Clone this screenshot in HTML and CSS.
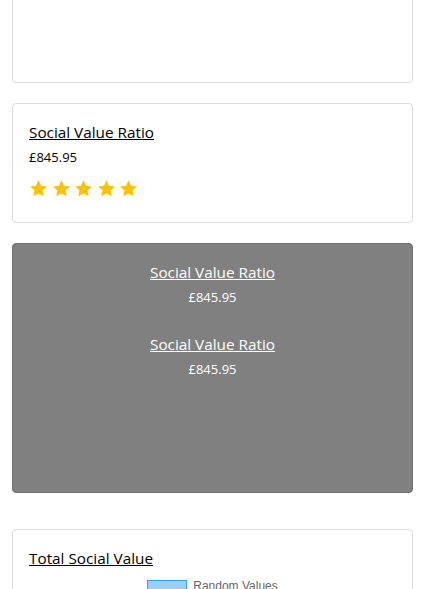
FILE: index.html
```html
<!DOCTYPE html>
<html lang="en">
<head>
<meta charset="utf-8">
<title>Social Value</title>
<link rel="stylesheet" href="styles.css">
</head>
<body>
<div class="page">
  <div class="card card-empty"></div>

  <div class="card card-rating">
    <a class="title" href="#">Social Value Ratio</a>
    <div class="price">£845.95</div>
    <div class="stars">
      <svg class="star" viewBox="0 0 24 24"><path d="M12 1.6l3.2 6.9 7.4.9-5.5 5.1 1.5 7.4L12 18.2l-6.6 3.7 1.5-7.4-5.5-5.1 7.4-.9z"/></svg>
      <svg class="star" viewBox="0 0 24 24"><path d="M12 1.6l3.2 6.9 7.4.9-5.5 5.1 1.5 7.4L12 18.2l-6.6 3.7 1.5-7.4-5.5-5.1 7.4-.9z"/></svg>
      <svg class="star" viewBox="0 0 24 24"><path d="M12 1.6l3.2 6.9 7.4.9-5.5 5.1 1.5 7.4L12 18.2l-6.6 3.7 1.5-7.4-5.5-5.1 7.4-.9z"/></svg>
      <svg class="star" viewBox="0 0 24 24"><path d="M12 1.6l3.2 6.9 7.4.9-5.5 5.1 1.5 7.4L12 18.2l-6.6 3.7 1.5-7.4-5.5-5.1 7.4-.9z"/></svg>
      <svg class="star" viewBox="0 0 24 24"><path d="M12 1.6l3.2 6.9 7.4.9-5.5 5.1 1.5 7.4L12 18.2l-6.6 3.7 1.5-7.4-5.5-5.1 7.4-.9z"/></svg>
    </div>
  </div>

  <div class="card card-grey">
    <div class="stat">
      <a class="title" href="#">Social Value Ratio</a>
      <div class="price">£845.95</div>
    </div>
    <div class="stat">
      <a class="title" href="#">Social Value Ratio</a>
      <div class="price">£845.95</div>
    </div>
  </div>

  <div class="card card-chart">
    <a class="title" href="#">Total Social Value</a>
    <div class="legend">
      <span class="legend-box"></span>
      <span class="legend-text">Random Values</span>
    </div>
  </div>
</div>
</body>
</html>
```

FILE: styles.css
```css
html, body {
  margin: 0;
  padding: 0;
  background: #fff;
  overflow: hidden;
}

body {
  font-family: "Open Sans", "Noto Sans", sans-serif;
  color: #000;
}

.page {
  display: flex;
  flex-direction: column;
  padding: 0 12px;
}

.card {
  border: 1px solid #dcdcdc;
  border-radius: 4px;
  padding: 17px 16px 16px;
  background: #fff;
  display: flex;
  flex-direction: column;
  align-items: flex-start;
}

.card-empty {
  margin-top: -20px;
  height: 68px;
  margin-bottom: 20px;
}

.title {
  font-size: 15.3px;
  line-height: 22px;
  color: #000;
  text-decoration: underline;
}

.price {
  font-size: 13px;
  line-height: 20px;
  margin-top: 4px;
}

.stars {
  display: flex;
  gap: 3.5px;
  margin-top: 12px;
  margin-bottom: 8px;
}

.star {
  width: 19px;
  height: 19px;
  fill: #ffc107;
}

.card-grey {
  margin-top: 20px;
  background: #808080;
  border-color: #6f6f6f;
  height: 250px;
  box-sizing: border-box;
  align-items: stretch;
  padding-top: 17px;
  gap: 26px;
}

.stat {
  display: flex;
  flex-direction: column;
  align-items: center;
}

.card-grey .title,
.card-grey .price {
  color: #fff;
}

.card-chart {
  margin-top: 36px;
  height: 200px;
  align-items: flex-start;
}

.legend {
  align-self: center;
  display: flex;
  align-items: flex-start;
  gap: 6px;
  margin-top: 11px;
}

.legend-box {
  width: 38px;
  height: 12px;
  background: rgba(54, 162, 235, 0.5);
  border: 1px solid rgb(54, 162, 235);
}

.legend-text {
  font-family: "Liberation Sans", Arial, sans-serif;
  font-size: 12px;
  line-height: 12px;
  color: #666;
}
```
